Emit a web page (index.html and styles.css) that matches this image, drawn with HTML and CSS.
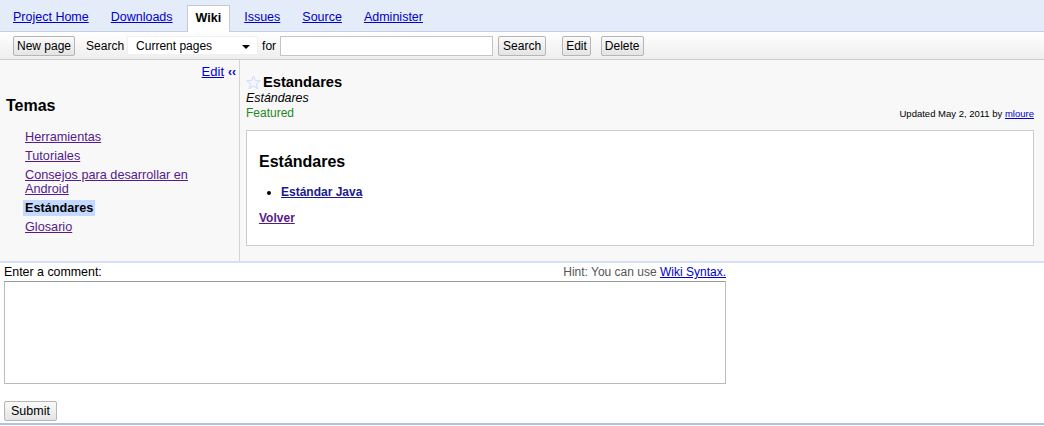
FILE: index.html
```html
<!DOCTYPE html>
<html>
<head>
<meta charset="utf-8">
<link rel="stylesheet" href="styles.css">
</head>
<body>
<div class="tabbar">
  <a class="tab" href="#">Project Home</a>
  <a class="tab" href="#">Downloads</a>
  <span class="tab active">Wiki</span>
  <a class="tab" href="#">Issues</a>
  <a class="tab" href="#">Source</a>
  <a class="tab" href="#">Administer</a>
</div>
<div class="toolbar">
  <button class="btn">New page</button>
  <span class="label lbl-search">Search</span>
  <div class="select"><span>Current pages</span><span class="arrow"></span></div>
  <span class="label lbl-for">for</span>
  <input class="query" type="text">
  <button class="btn btn-search">Search</button>
  <button class="btn btn-edit">Edit</button>
  <button class="btn">Delete</button>
</div>
<div class="main">
  <aside class="sidebar">
    <div class="side-edit"><a href="#" class="link">Edit</a><span class="collapse">‹‹</span></div>
    <h3 class="side-title">Temas</h3>
    <ul class="side-list">
      <li><a href="#" class="visited">Herramientas</a></li>
      <li><a href="#" class="visited">Tutoriales</a></li>
      <li><a href="#" class="visited">Consejos para desarrollar en Android</a></li>
      <li><span class="current">Estándares</span></li>
      <li><a href="#" class="visited">Glosario</a></li>
    </ul>
  </aside>
  <section class="content">
    <div class="page-head">
      <div class="head-left">
        <div class="title-row">
          <svg class="star" width="15" height="15" viewBox="0 0 15 15"><path d="M7.5 1 L9.3 5.6 L14.2 5.8 L10.4 8.9 L11.7 13.7 L7.5 11 L3.3 13.7 L4.6 8.9 L0.8 5.8 L5.7 5.6 Z" fill="#f4f8fe" stroke="#c9dcf2" stroke-width="1"/></svg>
          <span class="page-title">Estandares</span>
        </div>
        <div class="summary">Estándares</div>
        <div class="featured">Featured</div>
      </div>
      <div class="updated">Updated May 2, 2011 by <a href="#" class="link">mloure</a></div>
    </div>
    <div class="wikibox">
      <h2 class="wiki-h">Estándares</h2>
      <ul class="wiki-list">
        <li><a href="#" class="wlink">Estándar Java</a></li>
      </ul>
      <p class="wiki-p"><a href="#" class="wvisited">Volver</a></p>
    </div>
  </section>
</div>
<div class="comment">
  <div class="comment-head">
    <span>Enter a comment:</span>
    <span class="hint">Hint: You can use <a href="#" class="link">Wiki Syntax.</a></span>
  </div>
  <textarea class="comment-box"></textarea>
  <div class="submit-row"><button class="btn btn-submit">Submit</button></div>
</div>
</body>
</html>
```
FILE: styles.css
```css
* { box-sizing: border-box; }
html, body { margin: 0; padding: 0; background: #fff; }
body {
  font-family: "Liberation Sans", Arial, sans-serif;
  font-size: 13px;
  color: #000;
  width: 1044px;
  height: 426px;
  overflow: hidden;
}
a { color: #0000cc; }
.link { color: #0000cc; text-decoration: underline; }
.visited { color: #551a8b; text-decoration: underline; }

.tabbar {
  height: 32px;
  background: #e5ecf9;
  border-bottom: 1px solid #c3d0e6;
  display: flex;
  align-items: flex-end;
  padding-left: 5px;
  gap: 6px;
  font-size: 12.5px;
}
.tab {
  height: 26px;
  line-height: 24px;
  padding: 0 8px;
  color: #0000cc;
  text-decoration: underline;
}
.tab.active {
  background: #fff;
  border: 1px solid #c3cbd6;
  border-bottom: none;
  color: #000;
  font-weight: bold;
  text-decoration: none;
  margin-bottom: -1px;
  height: 27px;
  padding: 0 8px;
}

.toolbar {
  height: 28px;
  background: linear-gradient(#ffffff, #eeeeee);
  border-bottom: 1px solid #cccccc;
  display: flex;
  align-items: center;
  padding-left: 13px;
  font-size: 12px;
}
.btn {
  font-family: "Liberation Sans", Arial, sans-serif;
  font-size: 12px;
  height: 20px;
  padding: 0 3px;
  border: 1px solid #b5b5b5;
  border-radius: 2px;
  background: linear-gradient(#fafafa, #e4e4e4);
  color: #000;
  line-height: 18px;
}
.lbl-search { margin-left: 11px; }
.select {
  margin-left: 3px;
  width: 131px;
  height: 19px;
  background: #fff;
  border: 1px solid #f0f0f0;
  display: flex;
  align-items: center;
  justify-content: space-between;
  padding: 0 7px 0 8px;
}
.arrow {
  width: 0; height: 0;
  border-left: 4px solid transparent;
  border-right: 4px solid transparent;
  border-top: 4px solid #000;
  margin-top: 3px;
}
.lbl-for { margin-left: 4px; }
.query {
  margin-left: 4px;
  width: 213px;
  height: 20px;
  border: 1px solid #c4c4c4;
  background: #fff;
}
.btn-search { margin-left: 5px; padding: 0 4px; }
.btn-edit { margin-left: 16px; margin-right: 10px; }

.main {
  height: 203px;
  background: #f8f8f8;
  display: flex;
  border-bottom: 2px solid #d5e1f2;
}
.sidebar {
  width: 240px;
  border-right: 1px solid #d4d4d4;
  padding: 4px 0 0 6px;
}
.side-edit {
  text-align: right;
  padding-right: 3px;
  font-size: 13px;
  line-height: 15px;
}
.collapse { color: #0000cc; margin-left: 4px; font-weight: bold; font-size: 12px; }
.side-title {
  margin: 17px 0 0 0;
  font-size: 16px;
  font-weight: bold;
  line-height: 18px;
}
.side-list {
  list-style: none;
  margin: 15px 0 0 0;
  padding: 0 0 0 19px;
  font-size: 12.7px;
  line-height: 14px;
}
.side-list li { margin-bottom: 5px; width: 175px; }
.current {
  font-weight: bold;
  background: #c3d9ff;
  padding: 1px 2px 1px 2px;
  margin-left: -2px;
}

.content {
  flex: 1;
  padding: 14px 10px 0 6px;
}
.page-head {
  display: flex;
  justify-content: space-between;
  align-items: flex-end;
}
.title-row { display: flex; align-items: center; height: 16px; }
.star { margin-right: 2px; }
.page-title { font-weight: bold; font-size: 14.7px; }
.summary { font-style: italic; font-size: 12.4px; line-height: 16px; }
.featured { color: #228822; font-size: 12px; line-height: 15px; }
.updated { font-size: 9.5px; padding-bottom: 2px; }
.updated .link { color: #0000cc; }

.wikibox {
  margin-top: 9px;
  background: #fff;
  border: 1px solid #cccccc;
  height: 116px;
  padding: 22px 12px 0 12px;
}
.wiki-h {
  margin: 0;
  font-size: 16px;
  font-weight: bold;
  line-height: 18px;
}
.wiki-list {
  margin: 14px 0 0 0;
  padding-left: 22px;
  font-size: 12px;
  line-height: 15px;
}
.wlink { color: #1a1a8c; font-weight: bold; }
.wiki-p { margin: 11px 0 0 0; font-size: 12px; line-height: 15px; }
.wvisited { color: #551a8b; font-weight: bold; }

.comment {
  padding: 2px 0 0 4px;
}
.comment-head {
  width: 722px;
  display: flex;
  justify-content: space-between;
  font-size: 12.4px;
  line-height: 15px;
}
.hint { color: #555; font-size: 12px; }
.hint .link { color: #0000cc; }
.comment-box {
  display: block;
  margin-top: 1px;
  width: 722px;
  height: 103px;
  border: 1px solid #bbb;
  border-top-color: #999;
  resize: none;
}
.submit-row {
  height: 41px;
  padding-top: 17px;
  border-bottom: 2px solid #b3c3dd;
  margin-left: -4px;
  padding-left: 4px;
}
.btn-submit { padding: 0 6px; font-size: 12.5px; }
```
